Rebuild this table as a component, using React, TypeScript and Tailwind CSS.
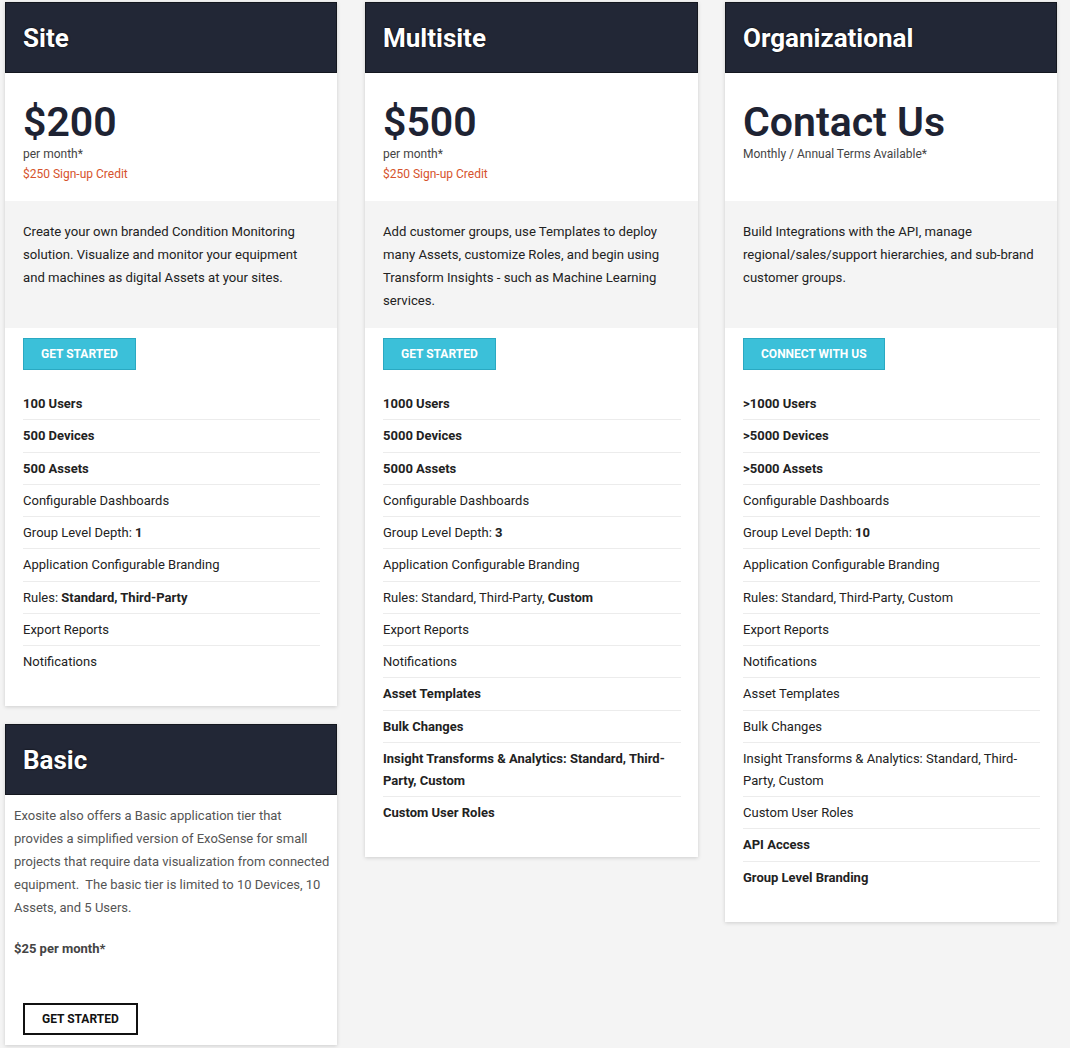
import React from 'react';

const b = (text: string) => ({ text, bold: true });
const n = (text: string) => ({ text });

const plans = [
  {
    title: 'Site',
    price: '$200',
    sub: 'per month*',
    credit: '$250 Sign-up Credit',
    desc: 'Create your own branded Condition Monitoring solution. Visualize and monitor your equipment and machines as digital Assets at your sites.',
    cta: 'GET STARTED',
    items: [
      [b('100 Users')],
      [b('500 Devices')],
      [b('500 Assets')],
      [n('Configurable Dashboards')],
      [n('Group Level Depth: '), b('1')],
      [n('Application Configurable Branding')],
      [n('Rules: '), b('Standard, Third-Party')],
      [n('Export Reports')],
      [n('Notifications')],
    ],
  },
  {
    title: 'Multisite',
    price: '$500',
    sub: 'per month*',
    credit: '$250 Sign-up Credit',
    desc: 'Add customer groups, use Templates to deploy many Assets, customize Roles, and begin using Transform Insights - such as Machine Learning services.',
    cta: 'GET STARTED',
    items: [
      [b('1000 Users')],
      [b('5000 Devices')],
      [b('5000 Assets')],
      [n('Configurable Dashboards')],
      [n('Group Level Depth: '), b('3')],
      [n('Application Configurable Branding')],
      [n('Rules: Standard, Third-Party, '), b('Custom')],
      [n('Export Reports')],
      [n('Notifications')],
      [b('Asset Templates')],
      [b('Bulk Changes')],
      [b('Insight Transforms & Analytics: Standard, Third-Party, Custom')],
      [b('Custom User Roles')],
    ],
  },
  {
    title: 'Organizational',
    price: 'Contact Us',
    sub: 'Monthly / Annual Terms Available*',
    credit: '',
    desc: 'Build Integrations with the API, manage regional/sales/support hierarchies, and sub-brand customer groups.',
    cta: 'CONNECT WITH US',
    items: [
      [b('>1000 Users')],
      [b('>5000 Devices')],
      [b('>5000 Assets')],
      [n('Configurable Dashboards')],
      [n('Group Level Depth: '), b('10')],
      [n('Application Configurable Branding')],
      [n('Rules: Standard, Third-Party, Custom')],
      [n('Export Reports')],
      [n('Notifications')],
      [n('Asset Templates')],
      [n('Bulk Changes')],
      [n('Insight Transforms & Analytics: Standard, Third-Party, Custom')],
      [n('Custom User Roles')],
      [b('API Access')],
      [b('Group Level Branding')],
    ],
  },
];

function Header({ title }: { title: string }) {
  return (
    <div className="h-[71px] bg-[#222736] border border-[#14171f] flex items-center px-[17px]">
      <h2 className="text-[26px] font-bold text-white leading-none [text-shadow:0_0_2px_#000]">
        {title}
      </h2>
    </div>
  );
}

function PlanCard({ plan }: { plan: (typeof plans)[0] }) {
  return (
    <div className="bg-white shadow-[0_1px_4px_rgba(0,0,0,0.16)] pb-[28px]">
      <Header title={plan.title} />
      <div className="h-[128px] px-[18px] pt-[29px]">
        <p className="text-[41px] leading-[40px] font-semibold text-[#1e2333]">{plan.price}</p>
        <p className="mt-[4px] text-[12px] leading-[16px] text-[#444]">{plan.sub}</p>
        {plan.credit && (
          <p className="mt-[4px] text-[12px] leading-[16px] text-[#d6532c]">{plan.credit}</p>
        )}
      </div>
      <div className="h-[127px] bg-[#f4f4f4] pl-[18px] pr-[16px] pt-[19px]">
        <p className="text-[13.15px] leading-[23px] text-[#222]">{plan.desc}</p>
      </div>
      <div className="px-[18px] pt-[10px]">
        <button className="h-[32px] px-[17px] bg-[#3bc0d9] border border-[#2aa9c2] text-white text-[12px] font-bold">
          {plan.cta}
        </button>
      </div>
      <ul className="mt-[18px] ml-[18px] mr-[17px]">
        {plan.items.map((parts, i) => (
          <li
            key={i}
            className={
              'pt-[5px] pb-[4.25px] text-[13px] leading-[22px] text-[#222] border-b ' +
              (i < plan.items.length - 1 ? 'border-[#ececec]' : 'border-transparent')
            }
          >
            {parts.map((p, j) => (
              <span key={j} className={p.bold ? 'font-bold' : ''}>
                {p.text}
              </span>
            ))}
          </li>
        ))}
      </ul>
    </div>
  );
}

function BasicCard() {
  return (
    <div className="bg-white shadow-[0_1px_4px_rgba(0,0,0,0.16)] pb-[10px]">
      <Header title="Basic" />
      <div className="pl-[9px] pr-[4px] pt-[9px]">
        <p className="text-[13px] leading-[23px] text-[#555]">
          Exosite also offers a Basic application tier that provides a simplified version of
          ExoSense for small projects that require data visualization from connected equipment.
          {'\u00a0 '}The basic tier is limited to 10 Devices, 10 Assets, and 5 Users.
        </p>
        <p className="mt-[18px] text-[13px] leading-[23px] font-bold text-[#444]">$25 per month*</p>
      </div>
      <div className="px-[18px] mt-[43px]">
        <button className="h-[32px] px-[17px] bg-white border-2 border-[#111] text-[#111] text-[12px] font-bold">
          GET STARTED
        </button>
      </div>
    </div>
  );
}

export default function App() {
  return (
    <div className="min-h-[1048px] bg-[#f4f4f4] font-['Roboto',sans-serif] pt-[2px] pl-[5px]">
      <div className="flex items-start">
        <div className="w-[332px] flex flex-col gap-[18px]">
          <PlanCard plan={plans[0]} />
          <BasicCard />
        </div>
        <div className="w-[333px] ml-[28px]">
          <PlanCard plan={plans[1]} />
        </div>
        <div className="w-[332px] ml-[27px]">
          <PlanCard plan={plans[2]} />
        </div>
      </div>
    </div>
  );
}
